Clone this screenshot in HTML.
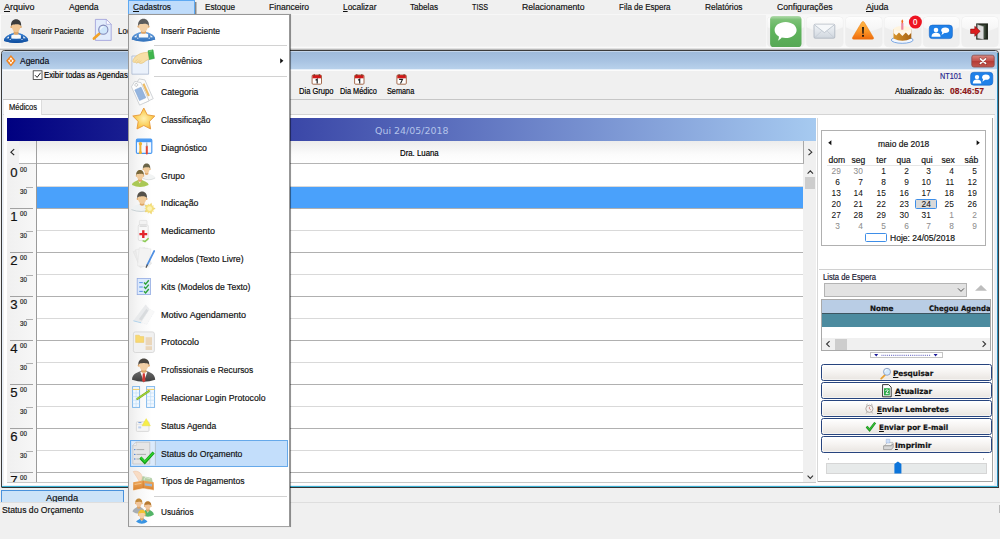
<!DOCTYPE html>
<html lang="pt-BR"><head><meta charset="utf-8"><title>Agenda</title>
<style>
*{box-sizing:border-box;margin:0;padding:0}
html,body{width:1000px;height:539px;overflow:hidden;background:#f0f0f0;font-family:"Liberation Sans",sans-serif}
#base,#top{position:absolute;left:0;top:0;width:1000px;height:539px;overflow:hidden}
#top{pointer-events:none}
.t{position:absolute;white-space:nowrap;display:inline-block;transform-origin:0 50%;-webkit-text-stroke:0.18px currentColor}
.a{position:absolute}
u{text-decoration:underline;text-decoration-thickness:0.7px;text-underline-offset:0.6px}
</style></head>
<body>
<div id="base">
<div class="a" style="left:0px;top:14px;width:1000.00px;height:1.00px;background:#f7f7f7"></div>
<div class="a" style="left:0px;top:15px;width:1.00px;height:34.00px;background:#fafafa"></div>
<div class="a" style="left:766px;top:14.6px;width:234.00px;height:34.80px;background:#f8f8f8"></div>
<div class="a" style="left:0px;top:46.4px;width:1000.00px;height:2.00px;background:linear-gradient(rgba(255,255,255,0),#fdfdfd)"></div>
<div class="a" style="left:0px;top:48.4px;width:1000.00px;height:1.60px;background:linear-gradient(#f4f4f4,#a8a8a8)"></div>
<div class="a" style="left:0.8px;top:49.8px;width:998.00px;height:438.10px;background:#e6eff9;border:1px solid #3b3b3b;border-radius:3.6px 3.6px 1px 1px"></div>
<div class="a" style="left:996.6px;top:53px;width:1.40px;height:434.00px;background:linear-gradient(90deg,#3aa0cc,#1f7fae)"></div>
<div class="a" style="left:2px;top:485.6px;width:996.00px;height:1.40px;background:linear-gradient(#48c4e2,#2a9cc0)"></div>
<div class="a" style="left:997.9px;top:53px;width:0.90px;height:434.90px;background:#3a3a3a"></div>
<div class="a" style="left:1.8px;top:486.9px;width:997.00px;height:1.00px;background:#333"></div>
<div class="a" style="left:1.8px;top:50.8px;width:994.90px;height:18.70px;background:linear-gradient(#dce7f4 0,#9fbbdb 7%,#a8c3e2 55%,#b8d1eb 100%);border-radius:2.6px 2.6px 0 0"></div>
<div class="a" style="left:2.8px;top:69.5px;width:992.60px;height:414.50px;background:#f0f0f0;border-top:1px solid #fbfbfb"></div>
<div class="a" style="left:2.8px;top:99px;width:992.60px;height:1.00px;background:#c6c6c6"></div>
<div class="a" style="left:2.8px;top:114.1px;width:992.60px;height:0.90px;background:#d4d4d4"></div>
<div class="a" style="left:3.8px;top:100px;width:38.40px;height:15.00px;background:#fff;border-right:1px solid #dcdcdc"></div>
<div class="a" style="left:3.5px;top:115px;width:990.90px;height:370.40px;background:#fff"></div>
<div class="a" style="left:7px;top:118px;width:809.30px;height:23.00px;background:linear-gradient(90deg,#000080,#a6caf0)"></div>
<div class="a" style="left:7px;top:141px;width:797.00px;height:23.00px;background:linear-gradient(#ececec,#fbfbfb 60%,#fff);border-bottom:1px solid #b4b4b4;border-right:1px solid #a8a8a8"></div>
<div class="a" style="left:7px;top:141px;width:12.00px;height:23.00px;background:#f2f2f2"></div>
<div class="a" style="left:36.3px;top:141px;width:1.00px;height:23.00px;background:#a0a0a0"></div>
<div class="a" style="left:7px;top:164.3px;width:29.30px;height:317.70px;background:linear-gradient(90deg,#f0f0f0,#f7f7f7)"></div>
<div class="a" style="left:36.3px;top:164px;width:1.00px;height:318.00px;background:#9a9a9a"></div>
<div class="a" style="left:37.3px;top:185.8px;width:765.30px;height:1.00px;background:#d9d9d9"></div>
<div class="a" style="left:26.2px;top:186.60000000000002px;width:7.00px;height:0.80px;background:#b0b0b0"></div>
<div class="a" style="left:37.3px;top:207.8px;width:765.30px;height:1.00px;background:#b0b0b0"></div>
<div class="a" style="left:9.6px;top:208.4px;width:23.60px;height:1.00px;background:#a2a2a2"></div>
<div class="a" style="left:37.3px;top:229.8px;width:765.30px;height:1.00px;background:#d9d9d9"></div>
<div class="a" style="left:26.2px;top:230.60000000000002px;width:7.00px;height:0.80px;background:#b0b0b0"></div>
<div class="a" style="left:37.3px;top:251.8px;width:765.30px;height:1.00px;background:#b0b0b0"></div>
<div class="a" style="left:9.6px;top:252.4px;width:23.60px;height:1.00px;background:#a2a2a2"></div>
<div class="a" style="left:37.3px;top:273.8px;width:765.30px;height:1.00px;background:#d9d9d9"></div>
<div class="a" style="left:26.2px;top:274.6px;width:7.00px;height:0.80px;background:#b0b0b0"></div>
<div class="a" style="left:37.3px;top:295.8px;width:765.30px;height:1.00px;background:#b0b0b0"></div>
<div class="a" style="left:9.6px;top:296.40000000000003px;width:23.60px;height:1.00px;background:#a2a2a2"></div>
<div class="a" style="left:37.3px;top:317.8px;width:765.30px;height:1.00px;background:#d9d9d9"></div>
<div class="a" style="left:26.2px;top:318.6px;width:7.00px;height:0.80px;background:#b0b0b0"></div>
<div class="a" style="left:37.3px;top:339.8px;width:765.30px;height:1.00px;background:#b0b0b0"></div>
<div class="a" style="left:9.6px;top:340.40000000000003px;width:23.60px;height:1.00px;background:#a2a2a2"></div>
<div class="a" style="left:37.3px;top:361.8px;width:765.30px;height:1.00px;background:#d9d9d9"></div>
<div class="a" style="left:26.2px;top:362.6px;width:7.00px;height:0.80px;background:#b0b0b0"></div>
<div class="a" style="left:37.3px;top:383.8px;width:765.30px;height:1.00px;background:#b0b0b0"></div>
<div class="a" style="left:9.6px;top:384.40000000000003px;width:23.60px;height:1.00px;background:#a2a2a2"></div>
<div class="a" style="left:37.3px;top:405.8px;width:765.30px;height:1.00px;background:#d9d9d9"></div>
<div class="a" style="left:26.2px;top:406.6px;width:7.00px;height:0.80px;background:#b0b0b0"></div>
<div class="a" style="left:37.3px;top:427.8px;width:765.30px;height:1.00px;background:#b0b0b0"></div>
<div class="a" style="left:9.6px;top:428.40000000000003px;width:23.60px;height:1.00px;background:#a2a2a2"></div>
<div class="a" style="left:37.3px;top:449.8px;width:765.30px;height:1.00px;background:#d9d9d9"></div>
<div class="a" style="left:26.2px;top:450.6px;width:7.00px;height:0.80px;background:#b0b0b0"></div>
<div class="a" style="left:37.3px;top:471.8px;width:765.30px;height:1.00px;background:#b0b0b0"></div>
<div class="a" style="left:9.6px;top:472.40000000000003px;width:23.60px;height:1.00px;background:#a2a2a2"></div>
<div class="a" style="left:37.3px;top:186.8px;width:765.30px;height:21.40px;background:#4aa1fb"></div>
<div class="a" style="left:802.5px;top:164px;width:0.80px;height:318.00px;background:#e4e4e4"></div>
<div class="a" style="left:804.4px;top:141px;width:11.80px;height:23.00px;background:#f0f0f0"></div>
<div class="a" style="left:803.4px;top:164px;width:12.80px;height:318.00px;background:#f0f0f0"></div>
<div class="a" style="left:7px;top:481.7px;width:809.20px;height:0.90px;background:#c8c8c8"></div>
<div class="a" style="left:805px;top:177.3px;width:10.30px;height:12.00px;background:#cdcdcd"></div>
<svg class="a" style="left:804px;top:141px" width="12" height="341" viewBox="0 0 12 341"><g fill="none" stroke="#333" stroke-width="1.1"><path d="M4.5 8.2L7.8 11.2L4.5 14.2"/><path d="M3.6 32.6L6.3 29.8L9 32.6"/><path d="M3.6 334.6L6.3 337.4L9 334.6"/></g></svg>
<svg class="a" style="left:7px;top:141px" width="12" height="23" viewBox="0 0 12 23"><path d="M7.2 8.2L3.9 11.2L7.2 14.2" fill="none" stroke="#222" stroke-width="1.1"/></svg>
<div class="a" style="left:817.3px;top:118px;width:1.00px;height:364.00px;background:#d8d8d8"></div>
<div class="a" style="left:818.3px;top:118px;width:174.70px;height:364.00px;background:#fff;border-right:1px solid #a6a6a6;border-bottom:1px solid #a6a6a6"></div>
<div class="a" style="left:821px;top:130px;width:165.20px;height:116.30px;background:#fff;border:1px solid #b0b0b0"></div>
<div class="a" style="left:827px;top:164.5px;width:153.00px;height:0.80px;background:#e6e6e6"></div>
<div class="a" style="left:915.2px;top:198.7px;width:22.20px;height:10.80px;background:#d9d9d9;border:1px solid #3e8ee8;border-radius:1.5px"></div>
<div class="a" style="left:865.3px;top:233.2px;width:21.30px;height:9.10px;background:#fff;border:1px solid #3e8ee8;border-radius:1.5px"></div>
<svg class="a" style="left:827px;top:139px" width="6" height="8" viewBox="0 0 6 8"><path d="M4.4 1.2V6.2L1.2 3.7Z" fill="#111"/></svg>
<svg class="a" style="left:975px;top:139px" width="6" height="8" viewBox="0 0 6 8"><path d="M1.6 1.2V6.2L4.8 3.7Z" fill="#111"/></svg>
<div class="a" style="left:819px;top:269.3px;width:173.00px;height:0.80px;background:#d0d0d0"></div>
<div class="a" style="left:823.9px;top:282.6px;width:143.60px;height:14.10px;background:#e2e2e2;border:1px solid #b3b3b3"></div>
<svg class="a" style="left:956px;top:286px" width="10" height="8" viewBox="0 0 10 8"><path d="M2 2.4L5 5.4L8 2.4" fill="none" stroke="#444" stroke-width="0.9"/></svg>
<svg class="a" style="left:974px;top:284px" width="14" height="8" viewBox="0 0 14 8"><path d="M1 6.8L7 1L13 6.8Z" fill="#bdbdbd"/></svg>
<div class="a" style="left:821.3px;top:299.4px;width:170.00px;height:51.60px;background:#fff;border:1px solid #a9a9a9"></div>
<div class="a" style="left:822.3px;top:300.4px;width:168.00px;height:12.60px;background:#b9cde5"></div>
<div class="a" style="left:822.3px;top:313px;width:168.00px;height:1.00px;background:#3d5560"></div>
<div class="a" style="left:822.3px;top:314px;width:168.00px;height:13.20px;background:#4c8b9f"></div>
<div class="a" style="left:822.3px;top:337.8px;width:168.00px;height:12.20px;background:#f0f0f0"></div>
<div class="a" style="left:835px;top:339px;width:12.00px;height:10.60px;background:#cdcdcd"></div>
<svg class="a" style="left:822px;top:338px" width="168" height="12" viewBox="0 0 168 12"><g fill="none" stroke="#333" stroke-width="1.1"><path d="M7.6 3.2L4.6 6L7.6 8.8"/><path d="M160.6 3.2L163.6 6L160.6 8.8"/></g></svg>
<div class="a" style="left:869.8px;top:352.3px;width:73.20px;height:5.50px;background:#fff;border:1px solid #c4c4c4"></div>
<svg class="a" style="left:870px;top:352px" width="73" height="6" viewBox="0 0 73 6"><path d="M4.2 2L8.2 2L6.2 4.6ZM63.6 2L67.6 2L65.6 4.6Z" fill="#1b1b9a"/><path d="M11.5 3.3H61" stroke="#3a3ab0" stroke-width="0.9" stroke-dasharray="0.9 1"/></svg>
<div class="a" style="left:820.9px;top:364.1px;width:170.80px;height:17.30px;background:linear-gradient(#fff,#f6f4f2 45%,#e9e5e1 100%);border:1px solid #27447e;border-radius:2.5px;box-shadow:inset 0 0 0 0.6px #fff"></div>
<div class="a" style="left:820.9px;top:381.8px;width:170.80px;height:17.30px;background:linear-gradient(#fff,#f6f4f2 45%,#e9e5e1 100%);border:1px solid #27447e;border-radius:2.5px;box-shadow:inset 0 0 0 0.6px #fff"></div>
<div class="a" style="left:820.9px;top:399.7px;width:170.80px;height:17.30px;background:linear-gradient(#fff,#f6f4f2 45%,#e9e5e1 100%);border:1px solid #27447e;border-radius:2.5px;box-shadow:inset 0 0 0 0.6px #fff"></div>
<div class="a" style="left:820.9px;top:418.0px;width:170.80px;height:17.30px;background:linear-gradient(#fff,#f6f4f2 45%,#e9e5e1 100%);border:1px solid #27447e;border-radius:2.5px;box-shadow:inset 0 0 0 0.6px #fff"></div>
<div class="a" style="left:820.9px;top:436.0px;width:170.80px;height:17.30px;background:linear-gradient(#fff,#f6f4f2 45%,#e9e5e1 100%);border:1px solid #27447e;border-radius:2.5px;box-shadow:inset 0 0 0 0.6px #fff"></div>
<div class="a" style="left:826px;top:463px;width:160.80px;height:10.50px;background:#e7eaea;border:1px solid #d6d6d6"></div>
<svg class="a" style="left:894px;top:461px" width="8" height="13" viewBox="0 0 8 13"><path d="M0.4 12.6V3L3.9 0.4L7.4 3V12.6Z" fill="#0c74da"/></svg>
<div class="a" style="left:828px;top:457.5px;width:0.70px;height:2.00px;background:#c4c4c4"></div>
<div class="a" style="left:983px;top:457.5px;width:0.70px;height:2.00px;background:#c4c4c4"></div>
<div class="a" style="left:1.0px;top:490.3px;width:122.80px;height:12.70px;background:#cce3f8;border:1px solid #4a92dc;border-bottom:none"></div>
<div class="a" style="left:0px;top:502.4px;width:1000.00px;height:0.80px;background:#dedede"></div>
<div class="a" style="left:998.6px;top:505px;width:0.80px;height:7.50px;background:#b8b8b8"></div>
<svg class="a" style="left:0;top:0" width="1000" height="539" viewBox="0 0 1000 539"><defs>
<linearGradient id="gGreen" x1="0" y1="0" x2="0" y2="1"><stop offset="0" stop-color="#b4dcae"/><stop offset="0.12" stop-color="#7cc176"/><stop offset="0.45" stop-color="#5fb45c"/><stop offset="1" stop-color="#57a856"/></linearGradient>
<linearGradient id="gWarn" x1="0" y1="0" x2="0" y2="1"><stop offset="0" stop-color="#ffb84a"/><stop offset="0.55" stop-color="#fb9526"/><stop offset="1" stop-color="#ee6a0c"/></linearGradient>
<linearGradient id="gMail" x1="0" y1="0" x2="0" y2="1"><stop offset="0" stop-color="#f2f5f8"/><stop offset="1" stop-color="#cfd6de"/></linearGradient>
<linearGradient id="gRed" x1="0" y1="0" x2="0" y2="1"><stop offset="0" stop-color="#d98a84"/><stop offset="0.45" stop-color="#c4534d"/><stop offset="0.5" stop-color="#b43a35"/><stop offset="1" stop-color="#c2574e"/></linearGradient>
<linearGradient id="gGloss" x1="0" y1="0" x2="0" y2="1"><stop offset="0" stop-color="#fdfdfd"/><stop offset="1" stop-color="#f4f4f4"/></linearGradient>
<radialGradient id="gStar" cx="0.5" cy="0.5" r="0.6"><stop offset="0" stop-color="#fff0b0"/><stop offset="0.6" stop-color="#fbcf5a"/><stop offset="1" stop-color="#f3a83a"/></radialGradient>
<linearGradient id="gBlueBody" x1="0" y1="0" x2="0" y2="1"><stop offset="0" stop-color="#3f86d6"/><stop offset="1" stop-color="#0d4c9e"/></linearGradient>
<linearGradient id="gBlueBody2" x1="0" y1="0" x2="0" y2="1"><stop offset="0" stop-color="#6aa2e0"/><stop offset="1" stop-color="#3272bc"/></linearGradient>
<linearGradient id="gSuit" x1="0" y1="0" x2="0" y2="1"><stop offset="0" stop-color="#6c6c6c"/><stop offset="1" stop-color="#3e3e3e"/></linearGradient>
<linearGradient id="gWallet" x1="0" y1="0" x2="0" y2="1"><stop offset="0" stop-color="#eda65a"/><stop offset="1" stop-color="#d9822e"/></linearGradient>
<linearGradient id="gCake" x1="0" y1="0" x2="1" y2="0"><stop offset="0" stop-color="#d8942c"/><stop offset="1" stop-color="#a86414"/></linearGradient>
</defs>
<g opacity="1"><path d="M4.0,41.1 C4.0,35.1 11.6,34.2 13.9,32.8 L18.4,32.8 C20.6,34.2 28.2,35.1 28.2,41.1 Q16.1,44.9 4.0,41.1Z" fill="url(#gBlueBody)"/><clipPath id="cp1"><path d="M4.0,41.1 C4.0,35.1 11.6,34.2 13.9,32.8 L18.4,32.8 C20.6,34.2 28.2,35.1 28.2,41.1 Q16.1,44.9 4.0,41.1Z"/></clipPath><g clip-path="url(#cp1)"><path d="M3.0,31.6 H29.2 V37.8 Q16.1,39.6 3.0,37.8Z" fill="#fafafa"/><path d="M9.2,32.6 H11.3 V39.8 H8.8Z" fill="url(#gBlueBody)"/><path d="M23.0,32.6 H20.9 V39.8 H23.4Z" fill="url(#gBlueBody)"/><path d="M4.0,41.1 C4.0,35.1 11.6,34.2 13.9,32.8 L18.4,32.8 C20.6,34.2 28.2,35.1 28.2,41.1 Q16.1,44.9 4.0,41.1Z" fill="none" stroke="url(#gBlueBody)" stroke-width="2.8"/><circle cx="10.2" cy="39.4" r="0.7" fill="#cfe0f6"/><circle cx="22.0" cy="39.4" r="0.7" fill="#cfe0f6"/></g><path d="M14.0,29.6 L13.6,33.9 Q16.1,35.8 18.6,33.9 L18.2,29.6Z" fill="#dfa566"/><circle cx="11.6" cy="26.9" r="1.20" fill="#e3ad72"/><circle cx="20.6" cy="26.9" r="1.20" fill="#e3ad72"/><path d="M11.6,23.6 C11.4,29.3 13.6,32.3 16.1,32.3 C18.6,32.3 20.9,29.3 20.6,23.6 Q16.1,18.9 11.6,23.6Z" fill="#f1c694"/><path d="M11.1,26.6 C9.6,16.8 22.6,16.8 21.1,26.6 C20.2,23.6 17.6,24.8 16.1,24.3 C14.1,24.8 12.0,23.6 11.1,26.6Z" fill="#3c3c3c"/></g>
<path d="M95.4,19.4H106.3L111.2,24.3V40.4H95.4Z" fill="#e2ecfc" stroke="#9c9cd8" stroke-width="0.8"/><path d="M106.3,19.4V24.3H111.2Z" fill="#fff" stroke="#9c9cd8" stroke-width="0.6"/><path d="M99.6,33.6L93.9,38.6" stroke="#f2a227" stroke-width="2.6" stroke-linecap="round"/><circle cx="103.3" cy="29.7" r="4.6" fill="#cfe6fb" stroke="#8288b8" stroke-width="1.1"/><path d="M100.6,29.6A2.9,2.9 0 0 1 103.6,26.7" stroke="#fff" stroke-width="1" fill="none"/>
<rect x="767.2" y="16.8" width="37.2" height="30.0" rx="4" fill="#eeeeee" stroke="#ececec" stroke-width="0.5"/><path d="M767.5,20.8 Q767.5,17.1 771.2,17.1 L800.4,17.1 Q804.1,17.1 804.1,20.8 L804.1,27.3 Q785.8,36.3 767.5,27.3Z" fill="url(#gGloss)"/>
<rect x="806.3" y="16.8" width="36.9" height="30.0" rx="4" fill="#eeeeee" stroke="#ececec" stroke-width="0.5"/><path d="M806.5999999999999,20.8 Q806.5999999999999,17.1 810.3,17.1 L839.2,17.1 Q842.9000000000001,17.1 842.9000000000001,20.8 L842.9000000000001,27.3 Q824.8,36.3 806.5999999999999,27.3Z" fill="url(#gGloss)"/>
<rect x="845.5" y="16.8" width="36.7" height="30.0" rx="4" fill="#eeeeee" stroke="#ececec" stroke-width="0.5"/><path d="M845.8,20.8 Q845.8,17.1 849.5,17.1 L878.2,17.1 Q881.9000000000001,17.1 881.9000000000001,20.8 L881.9000000000001,27.3 Q863.9,36.3 845.8,27.3Z" fill="url(#gGloss)"/>
<rect x="884.3" y="16.8" width="37.0" height="30.0" rx="4" fill="#eeeeee" stroke="#ececec" stroke-width="0.5"/><path d="M884.5999999999999,20.8 Q884.5999999999999,17.1 888.3,17.1 L917.3,17.1 Q921.0,17.1 921.0,20.8 L921.0,27.3 Q902.8,36.3 884.5999999999999,27.3Z" fill="url(#gGloss)"/>
<rect x="923.2" y="16.8" width="36.2" height="30.0" rx="4" fill="#eeeeee" stroke="#ececec" stroke-width="0.5"/><path d="M923.5,20.8 Q923.5,17.1 927.2,17.1 L955.4,17.1 Q959.1,17.1 959.1,20.8 L959.1,27.3 Q941.3,36.3 923.5,27.3Z" fill="url(#gGloss)"/>
<rect x="961.7" y="16.8" width="36.6" height="30.0" rx="4" fill="#eeeeee" stroke="#ececec" stroke-width="0.5"/><path d="M962.0,20.8 Q962.0,17.1 965.7,17.1 L994.3,17.1 Q998.0,17.1 998.0,20.8 L998.0,27.3 Q980.0,36.3 962.0,27.3Z" fill="url(#gGloss)"/>
<rect x="770.1" y="16" width="31.4" height="31" rx="3.6" fill="url(#gGreen)"/><path d="M785.6,21.9C791.8,21.9 796.6,25.5 796.6,30C796.6,34.5 791.8,38.1 785.6,38.1C784.2,38.1 782.9,37.9 781.7,37.6C780.8,38.9 779.4,40.2 777.8,40.7C778.6,39.6 779.0,38.1 778.9,36.6C776.3,35.1 774.6,32.7 774.6,30C774.6,25.5 779.4,21.9 785.6,21.9Z" fill="#fff"/>
<rect x="814" y="24.2" width="20.8" height="14" rx="1.2" fill="url(#gMail)" stroke="#a9b1bc" stroke-width="0.8"/><path d="M814.4,24.8L824.4,32.6L834.4,24.8" fill="#f6f8fa" stroke="#b4bcc6" stroke-width="0.8"/><path d="M814.6,37.8L821.6,31.2M834.2,37.8L827.2,31.2" stroke="#bcc3cc" stroke-width="0.6" fill="none"/>
<path d="M863,21.6Q863.9,21.6 864.4,22.5L873.5,37.6Q874.2,39.2 872.4,39.2H853.6Q851.8,39.2 852.5,37.6L861.6,22.5Q862.1,21.6 863,21.6Z" fill="url(#gWarn)" stroke="#e8780f" stroke-width="0.5"/><path d="M862.1,27H863.9L863.6,33.8H862.4Z" fill="#111"/><rect x="862.1" y="34.9" width="1.8" height="1.8" fill="#111"/>
<ellipse cx="902.2" cy="40" rx="10.9" ry="3.3" fill="#f2f7ff" stroke="#6f9fe0" stroke-width="0.9"/><path d="M893.5,29.2V38.6Q902.4,43 911.3,38.6V29.2Z" fill="url(#gCake)"/><ellipse cx="902.4" cy="29.2" rx="8.9" ry="3.2" fill="#fff4de"/><path d="M893.5,29.4V33L896.2,35.6L899,32.6L902.4,36L905.8,32.6L908.6,35.4L911.3,32.8V29.4Q902.4,33.6 893.5,29.4Z" fill="#fff8ec"/><rect x="901.2" y="22.8" width="2.2" height="7" rx="0.6" fill="#ee86a0"/><path d="M902.3,19.2Q904.2,21.6 902.3,23.6Q900.4,21.6 902.3,19.2Z" fill="#f2661a"/><circle cx="915.4" cy="22.1" r="6.5" fill="#ee1422"/>
<rect x="929.3" y="25.1" width="23.1" height="13.5" rx="3.2" fill="#1f80e8" stroke="#1463c4" stroke-width="0.6"/><circle cx="936.0" cy="30.1" r="2.30" fill="#fff"/><path d="M931.5,36.7Q931.5,32.7 936.0,32.7Q940.5,32.7 940.5,36.7Z" fill="#fff"/><ellipse cx="945.2" cy="30.2" rx="3.93" ry="2.70" fill="#fff"/><path d="M942.5,31.6L941.5,35.1L944.8,32.7Z" fill="#fff"/>
<rect x="970.6" y="72.3" width="22.2" height="12.9" rx="3.2" fill="#1f80e8" stroke="#1463c4" stroke-width="0.6"/><circle cx="977.0" cy="77.1" r="2.19" fill="#fff"/><path d="M972.8,83.4Q972.8,79.5 977.0,79.5Q981.3,79.5 981.3,83.4Z" fill="#fff"/><ellipse cx="985.9" cy="77.2" rx="3.77" ry="2.58" fill="#fff"/><path d="M983.3,78.5L982.4,81.8L985.5,79.5Z" fill="#fff"/>
<rect x="976.2" y="23.4" width="11.8" height="16.2" fill="#23291f"/><path d="M977.6,24.8H985.6V38.2H977.6Z" fill="#3c4a3a"/><path d="M977.4,24.6L983.6,26.6V39.4L977.4,38.2Z" fill="#dcdcdc" stroke="#8a8a8a" stroke-width="0.4"/><path d="M970.6,29.1H974.8V26.3L980.2,31.3L974.8,36.3V33.5H970.6Z" fill="#dc1c1c" stroke="#7e0e0e" stroke-width="0.6"/>
<rect x="971.8" y="55.2" width="22.4" height="11.8" rx="2" fill="url(#gRed)" stroke="#8a4a48" stroke-width="0.8"/><path d="M980.2,58.6L985.8,63.6M985.8,58.6L980.2,63.6" stroke="#5a2a2a" stroke-width="2.6" stroke-linecap="round" opacity="0.5"/><path d="M980.4,58.8L985.6,63.4M985.6,58.8L980.4,63.4" stroke="#fff" stroke-width="1.6" stroke-linecap="round"/>
<path d="M10.9,55L15.7,60.7L10.9,66.4L6.1,60.7Z" fill="#f0831f"/><path d="M10.9,57.2L13.7,60.7L10.9,64.2L8.1,60.7Z" fill="#fff"/><path d="M10.9,59.2L12.2,60.7L10.9,62.2L9.6,60.7Z" fill="#f39a45"/><path d="M8.6,58.2L13.2,63.4M13.2,58.2L8.6,63.4" stroke="#f0831f" stroke-width="0.7"/>
<rect x="33.2" y="70.8" width="8.8" height="8.6" fill="#fff" stroke="#333" stroke-width="0.8"/><path d="M35,75.2L37.1,77.4L40.6,72.8" fill="none" stroke="#222" stroke-width="1"/>
<rect x="312.1" y="75.0" width="9.4" height="9.2" rx="1" fill="#fff" stroke="#9a5a3a" stroke-width="0.9"/><rect x="312.5" y="75.10000000000001" width="8.6" height="3.2" fill="#d21a1a"/><rect x="313.70000000000005" y="74.2" width="1.2" height="2" fill="#7a3a2a"/><rect x="318.70000000000005" y="74.2" width="1.2" height="2" fill="#7a3a2a"/><path d="M315.6,80.2L317.2,79.2V83.6" stroke="#222" stroke-width="1.2" fill="none"/>
<rect x="354.6" y="75.0" width="9.4" height="9.2" rx="1" fill="#fff" stroke="#9a5a3a" stroke-width="0.9"/><rect x="355.0" y="75.10000000000001" width="8.6" height="3.2" fill="#d21a1a"/><rect x="356.20000000000005" y="74.2" width="1.2" height="2" fill="#7a3a2a"/><rect x="361.20000000000005" y="74.2" width="1.2" height="2" fill="#7a3a2a"/><path d="M358.1,80.2L359.7,79.2V83.6" stroke="#222" stroke-width="1.2" fill="none"/>
<rect x="396.9" y="75.0" width="9.4" height="9.2" rx="1" fill="#fff" stroke="#9a5a3a" stroke-width="0.9"/><rect x="397.29999999999995" y="75.10000000000001" width="8.6" height="3.2" fill="#d21a1a"/><rect x="398.5" y="74.2" width="1.2" height="2" fill="#7a3a2a"/><rect x="403.5" y="74.2" width="1.2" height="2" fill="#7a3a2a"/><path d="M399.1,79.4H402.5L400.5,83.6" stroke="#222" stroke-width="1.1" fill="none"/>
<path d="M884.8,375.2L881.2,378.6" stroke="#e8a030" stroke-width="1.8" stroke-linecap="round"/><circle cx="887" cy="371.8" r="3.5" fill="#d4eafc" stroke="#8a9cc0" stroke-width="0.9"/><path d="M885,371.6A2,2 0 0 1 887.2,369.6" stroke="#fff" stroke-width="0.8" fill="none"/>
<path d="M882.6,384.6H888.6L891.2,387.2V396.8H882.6Z" fill="#fff" stroke="#222" stroke-width="0.9"/><rect x="884" y="388.2" width="5.8" height="7.2" fill="#2fa84a"/><path d="M885.4,390.6Q886.9,389 888.3,390.4L886,393.6H888.6" stroke="#fff" stroke-width="0.9" fill="none"/>
<circle cx="869.4" cy="408.8" r="3.6" fill="#f4f0ee" stroke="#a8a09c" stroke-width="0.9"/><path d="M869.4,406.8V408.9L870.8,409.8" stroke="#c0504a" stroke-width="0.6" fill="none"/><path d="M866.2,405.2L867.6,404M872.6,405.2L871.2,404M867,412.2L866.2,413.4M871.8,412.2L872.6,413.4" stroke="#a8a09c" stroke-width="0.9"/>
<path d="M866.6,426.6L869.6,430L875.2,422.6" fill="none" stroke="#1e8a1e" stroke-width="2.4"/><path d="M866.8,426.6L869.6,429.6L875,422.8" fill="none" stroke="#35c035" stroke-width="1.3"/>
<path d="M884.6,445.6L887.4,442.4H892.8L890.8,445.6Z" fill="#f4f4f4" stroke="#9a9a9a" stroke-width="0.5"/><path d="M883.6,445.8H891.4L893.2,443.6V447.2L891.4,449.6H883.6Z" fill="#d8d8d8" stroke="#7a7a7a" stroke-width="0.6"/><path d="M886.2,439.2H889.8V443H886.2Z" fill="#cfe0f8" stroke="#8aa6d8" stroke-width="0.4"/>
</svg>
<span class="t" style="left:4.10px;top:1.54px;font-size:8.9px;line-height:10.68px;color:#111;transform:scaleX(1.0136);"><u>A</u>rquivo</span>
<span class="t" style="left:69.00px;top:1.54px;font-size:8.9px;line-height:10.68px;color:#111;transform:scaleX(0.9641);">Agenda</span>
<span class="t" style="left:204.50px;top:1.54px;font-size:8.9px;line-height:10.68px;color:#111;transform:scaleX(0.9212);">Estoque</span>
<span class="t" style="left:268.50px;top:1.54px;font-size:8.9px;line-height:10.68px;color:#111;transform:scaleX(0.9653);">Financeiro</span>
<span class="t" style="left:342.50px;top:1.54px;font-size:8.9px;line-height:10.68px;color:#111;transform:scaleX(0.9432);"><u>L</u>ocalizar</span>
<span class="t" style="left:410.00px;top:1.54px;font-size:8.9px;line-height:10.68px;color:#111;transform:scaleX(0.9154);">Tabelas</span>
<span class="t" style="left:472.00px;top:1.54px;font-size:8.9px;line-height:10.68px;color:#111;transform:scaleX(0.8111);">TISS</span>
<span class="t" style="left:522.00px;top:1.54px;font-size:8.9px;line-height:10.68px;color:#111;transform:scaleX(0.9745);">Relacionamento</span>
<span class="t" style="left:618.50px;top:1.54px;font-size:8.9px;line-height:10.68px;color:#111;transform:scaleX(0.9000);">Fila de Espera</span>
<span class="t" style="left:704.50px;top:1.54px;font-size:8.9px;line-height:10.68px;color:#111;transform:scaleX(0.9386);">Relatórios</span>
<span class="t" style="left:776.50px;top:1.54px;font-size:8.9px;line-height:10.68px;color:#111;transform:scaleX(0.9698);">Configurações</span>
<span class="t" style="left:866.00px;top:1.54px;font-size:8.9px;line-height:10.68px;color:#111;transform:scaleX(0.9912);"><u>A</u>juda</span>
<span class="t" style="left:31.00px;top:27.01px;font-size:8.2px;line-height:9.84px;color:#111;transform:scaleX(0.9317);">Inserir Paciente</span>
<span class="t" style="left:118.00px;top:27.01px;font-size:8.2px;line-height:9.84px;color:#111;transform:scaleX(0.9766);">Localizar</span>
<span class="t" style="left:913.20px;top:17.61px;font-size:8.2px;line-height:9.84px;color:#fff;transform:scaleX(0.9663);">0</span>
<span class="t" style="left:20.20px;top:55.55px;font-size:8.9px;line-height:10.68px;color:#0a0a14;transform:scaleX(0.9543);">Agenda</span>
<span class="t" style="left:44.00px;top:70.51px;font-size:8.2px;line-height:9.84px;color:#000;transform:scaleX(0.9547);">Exibir todas as Agendas</span>
<span class="t" style="left:298.70px;top:87.01px;font-size:8.2px;line-height:9.84px;color:#000;transform:scaleX(0.9219);">Dia Grupo</span>
<span class="t" style="left:340.10px;top:87.01px;font-size:8.2px;line-height:9.84px;color:#000;transform:scaleX(0.8986);">Dia Médico</span>
<span class="t" style="left:387.20px;top:87.01px;font-size:8.2px;line-height:9.84px;color:#000;transform:scaleX(0.8919);">Semana</span>
<span class="t" style="left:940.00px;top:71.81px;font-size:8.3px;line-height:9.96px;color:#26268e;transform:scaleX(0.8754);">NT101</span>
<span class="t" style="left:895.10px;top:87.11px;font-size:8.2px;line-height:9.84px;color:#000;transform:scaleX(0.9547);">Atualizado às:</span>
<span class="t" style="left:950.00px;top:87.02px;font-size:8.3px;line-height:9.96px;color:#8c1616;font-weight:bold;transform:scaleX(1.0207);">08:46:57</span>
<span class="t" style="left:9.00px;top:102.91px;font-size:8.2px;line-height:9.84px;color:#111;transform:scaleX(0.9184);">Médicos</span>
<span class="t" style="left:374.60px;top:125.53px;font-size:8.6px;line-height:10.32px;color:#b4c3ea;font-family:'DejaVu Sans', 'Liberation Sans', sans-serif;transform:scaleX(1.0978);-webkit-text-stroke:0;">Qui 24/05/2018</span>
<span class="t" style="left:400.00px;top:149.11px;font-size:8.2px;line-height:9.84px;color:#000;transform:scaleX(0.9553);">Dra. Luana</span>
<span class="t" style="left:10.20px;top:165.46px;font-size:13.2px;line-height:15.84px;color:#111;">0</span>
<span class="t" style="left:20.10px;top:165.73px;font-size:6.6px;line-height:7.92px;color:#222;transform:scaleX(0.9408);">00</span>
<span class="t" style="left:20.10px;top:188.03px;font-size:6.6px;line-height:7.92px;color:#222;transform:scaleX(0.9408);">30</span>
<span class="t" style="left:10.20px;top:209.46px;font-size:13.2px;line-height:15.84px;color:#111;">1</span>
<span class="t" style="left:20.10px;top:209.73px;font-size:6.6px;line-height:7.92px;color:#222;transform:scaleX(0.9408);">00</span>
<span class="t" style="left:20.10px;top:232.03px;font-size:6.6px;line-height:7.92px;color:#222;transform:scaleX(0.9408);">30</span>
<span class="t" style="left:10.20px;top:253.46px;font-size:13.2px;line-height:15.84px;color:#111;">2</span>
<span class="t" style="left:20.10px;top:253.73px;font-size:6.6px;line-height:7.92px;color:#222;transform:scaleX(0.9408);">00</span>
<span class="t" style="left:20.10px;top:276.03px;font-size:6.6px;line-height:7.92px;color:#222;transform:scaleX(0.9408);">30</span>
<span class="t" style="left:10.20px;top:297.46px;font-size:13.2px;line-height:15.84px;color:#111;">3</span>
<span class="t" style="left:20.10px;top:297.73px;font-size:6.6px;line-height:7.92px;color:#222;transform:scaleX(0.9408);">00</span>
<span class="t" style="left:20.10px;top:320.03px;font-size:6.6px;line-height:7.92px;color:#222;transform:scaleX(0.9408);">30</span>
<span class="t" style="left:10.20px;top:341.46px;font-size:13.2px;line-height:15.84px;color:#111;">4</span>
<span class="t" style="left:20.10px;top:341.73px;font-size:6.6px;line-height:7.92px;color:#222;transform:scaleX(0.9408);">00</span>
<span class="t" style="left:20.10px;top:364.03px;font-size:6.6px;line-height:7.92px;color:#222;transform:scaleX(0.9408);">30</span>
<span class="t" style="left:10.20px;top:385.46px;font-size:13.2px;line-height:15.84px;color:#111;">5</span>
<span class="t" style="left:20.10px;top:385.73px;font-size:6.6px;line-height:7.92px;color:#222;transform:scaleX(0.9408);">00</span>
<span class="t" style="left:20.10px;top:408.03px;font-size:6.6px;line-height:7.92px;color:#222;transform:scaleX(0.9408);">30</span>
<span class="t" style="left:10.20px;top:429.46px;font-size:13.2px;line-height:15.84px;color:#111;">6</span>
<span class="t" style="left:20.10px;top:429.73px;font-size:6.6px;line-height:7.92px;color:#222;transform:scaleX(0.9408);">00</span>
<span class="t" style="left:20.10px;top:452.03px;font-size:6.6px;line-height:7.92px;color:#222;transform:scaleX(0.9408);">30</span>
<div class="a" style="left:0;top:0;width:1000px;height:481.7px;overflow:hidden"><span class="t" style="left:10.20px;top:473.46px;font-size:13.2px;line-height:15.84px;color:#111;">7</span></div>
<span class="t" style="left:20.10px;top:473.73px;font-size:6.6px;line-height:7.92px;color:#222;transform:scaleX(0.9408);">00</span>
<span class="t" style="left:878.00px;top:139.24px;font-size:8.8px;line-height:10.56px;color:#111;transform:scaleX(0.9623);">maio de 2018</span>
<span class="t" style="top:154.74px;font-size:8.8px;line-height:10.56px;color:#111;left:auto;right:155.3px;transform-origin:100% 50%;transform:scaleX(0.97);">dom</span>
<span class="t" style="top:154.74px;font-size:8.8px;line-height:10.56px;color:#111;left:auto;right:135.0px;transform-origin:100% 50%;transform:scaleX(0.97);">seg</span>
<span class="t" style="top:154.74px;font-size:8.8px;line-height:10.56px;color:#111;left:auto;right:114.0px;transform-origin:100% 50%;transform:scaleX(0.97);">ter</span>
<span class="t" style="top:154.74px;font-size:8.8px;line-height:10.56px;color:#111;left:auto;right:89.7px;transform-origin:100% 50%;transform:scaleX(0.97);">qua</span>
<span class="t" style="top:154.74px;font-size:8.8px;line-height:10.56px;color:#111;left:auto;right:67.4px;transform-origin:100% 50%;transform:scaleX(0.97);">qui</span>
<span class="t" style="top:154.74px;font-size:8.8px;line-height:10.56px;color:#111;left:auto;right:45.4px;transform-origin:100% 50%;transform:scaleX(0.97);">sex</span>
<span class="t" style="top:154.74px;font-size:8.8px;line-height:10.56px;color:#111;left:auto;right:21.8px;transform-origin:100% 50%;transform:scaleX(0.97);">sáb</span>
<span class="t" style="top:166.04px;font-size:8.8px;line-height:10.56px;color:#8e8e8e;left:auto;right:159.7px;transform-origin:100% 50%;transform:scaleX(0.95);-webkit-text-stroke:0.05px currentColor;">29</span>
<span class="t" style="top:166.04px;font-size:8.8px;line-height:10.56px;color:#8e8e8e;left:auto;right:137.0px;transform-origin:100% 50%;transform:scaleX(0.95);-webkit-text-stroke:0.05px currentColor;">30</span>
<span class="t" style="top:166.04px;font-size:8.8px;line-height:10.56px;color:#111;left:auto;right:114.4px;transform-origin:100% 50%;transform:scaleX(0.95);-webkit-text-stroke:0.05px currentColor;">1</span>
<span class="t" style="top:166.04px;font-size:8.8px;line-height:10.56px;color:#111;left:auto;right:91.6px;transform-origin:100% 50%;transform:scaleX(0.95);-webkit-text-stroke:0.05px currentColor;">2</span>
<span class="t" style="top:166.04px;font-size:8.8px;line-height:10.56px;color:#111;left:auto;right:68.8px;transform-origin:100% 50%;transform:scaleX(0.95);-webkit-text-stroke:0.05px currentColor;">3</span>
<span class="t" style="top:166.04px;font-size:8.8px;line-height:10.56px;color:#111;left:auto;right:46.2px;transform-origin:100% 50%;transform:scaleX(0.95);-webkit-text-stroke:0.05px currentColor;">4</span>
<span class="t" style="top:166.04px;font-size:8.8px;line-height:10.56px;color:#111;left:auto;right:23.4px;transform-origin:100% 50%;transform:scaleX(0.95);-webkit-text-stroke:0.05px currentColor;">5</span>
<span class="t" style="top:177.06px;font-size:8.8px;line-height:10.56px;color:#111;left:auto;right:159.7px;transform-origin:100% 50%;transform:scaleX(0.95);-webkit-text-stroke:0.05px currentColor;">6</span>
<span class="t" style="top:177.06px;font-size:8.8px;line-height:10.56px;color:#111;left:auto;right:137.0px;transform-origin:100% 50%;transform:scaleX(0.95);-webkit-text-stroke:0.05px currentColor;">7</span>
<span class="t" style="top:177.06px;font-size:8.8px;line-height:10.56px;color:#111;left:auto;right:114.4px;transform-origin:100% 50%;transform:scaleX(0.95);-webkit-text-stroke:0.05px currentColor;">8</span>
<span class="t" style="top:177.06px;font-size:8.8px;line-height:10.56px;color:#111;left:auto;right:91.6px;transform-origin:100% 50%;transform:scaleX(0.95);-webkit-text-stroke:0.05px currentColor;">9</span>
<span class="t" style="top:177.06px;font-size:8.8px;line-height:10.56px;color:#111;left:auto;right:68.8px;transform-origin:100% 50%;transform:scaleX(0.95);-webkit-text-stroke:0.05px currentColor;">10</span>
<span class="t" style="top:177.06px;font-size:8.8px;line-height:10.56px;color:#111;left:auto;right:46.2px;transform-origin:100% 50%;transform:scaleX(0.95);-webkit-text-stroke:0.05px currentColor;">11</span>
<span class="t" style="top:177.06px;font-size:8.8px;line-height:10.56px;color:#111;left:auto;right:23.4px;transform-origin:100% 50%;transform:scaleX(0.95);-webkit-text-stroke:0.05px currentColor;">12</span>
<span class="t" style="top:188.08px;font-size:8.8px;line-height:10.56px;color:#111;left:auto;right:159.7px;transform-origin:100% 50%;transform:scaleX(0.95);-webkit-text-stroke:0.05px currentColor;">13</span>
<span class="t" style="top:188.08px;font-size:8.8px;line-height:10.56px;color:#111;left:auto;right:137.0px;transform-origin:100% 50%;transform:scaleX(0.95);-webkit-text-stroke:0.05px currentColor;">14</span>
<span class="t" style="top:188.08px;font-size:8.8px;line-height:10.56px;color:#111;left:auto;right:114.4px;transform-origin:100% 50%;transform:scaleX(0.95);-webkit-text-stroke:0.05px currentColor;">15</span>
<span class="t" style="top:188.08px;font-size:8.8px;line-height:10.56px;color:#111;left:auto;right:91.6px;transform-origin:100% 50%;transform:scaleX(0.95);-webkit-text-stroke:0.05px currentColor;">16</span>
<span class="t" style="top:188.08px;font-size:8.8px;line-height:10.56px;color:#111;left:auto;right:68.8px;transform-origin:100% 50%;transform:scaleX(0.95);-webkit-text-stroke:0.05px currentColor;">17</span>
<span class="t" style="top:188.08px;font-size:8.8px;line-height:10.56px;color:#111;left:auto;right:46.2px;transform-origin:100% 50%;transform:scaleX(0.95);-webkit-text-stroke:0.05px currentColor;">18</span>
<span class="t" style="top:188.08px;font-size:8.8px;line-height:10.56px;color:#111;left:auto;right:23.4px;transform-origin:100% 50%;transform:scaleX(0.95);-webkit-text-stroke:0.05px currentColor;">19</span>
<span class="t" style="top:199.10px;font-size:8.8px;line-height:10.56px;color:#111;left:auto;right:159.7px;transform-origin:100% 50%;transform:scaleX(0.95);-webkit-text-stroke:0.05px currentColor;">20</span>
<span class="t" style="top:199.10px;font-size:8.8px;line-height:10.56px;color:#111;left:auto;right:137.0px;transform-origin:100% 50%;transform:scaleX(0.95);-webkit-text-stroke:0.05px currentColor;">21</span>
<span class="t" style="top:199.10px;font-size:8.8px;line-height:10.56px;color:#111;left:auto;right:114.4px;transform-origin:100% 50%;transform:scaleX(0.95);-webkit-text-stroke:0.05px currentColor;">22</span>
<span class="t" style="top:199.10px;font-size:8.8px;line-height:10.56px;color:#111;left:auto;right:91.6px;transform-origin:100% 50%;transform:scaleX(0.95);-webkit-text-stroke:0.05px currentColor;">23</span>
<span class="t" style="top:199.10px;font-size:8.8px;line-height:10.56px;color:#111;left:auto;right:68.8px;transform-origin:100% 50%;transform:scaleX(0.95);-webkit-text-stroke:0.05px currentColor;">24</span>
<span class="t" style="top:199.10px;font-size:8.8px;line-height:10.56px;color:#111;left:auto;right:46.2px;transform-origin:100% 50%;transform:scaleX(0.95);-webkit-text-stroke:0.05px currentColor;">25</span>
<span class="t" style="top:199.10px;font-size:8.8px;line-height:10.56px;color:#111;left:auto;right:23.4px;transform-origin:100% 50%;transform:scaleX(0.95);-webkit-text-stroke:0.05px currentColor;">26</span>
<span class="t" style="top:210.12px;font-size:8.8px;line-height:10.56px;color:#111;left:auto;right:159.7px;transform-origin:100% 50%;transform:scaleX(0.95);-webkit-text-stroke:0.05px currentColor;">27</span>
<span class="t" style="top:210.12px;font-size:8.8px;line-height:10.56px;color:#111;left:auto;right:137.0px;transform-origin:100% 50%;transform:scaleX(0.95);-webkit-text-stroke:0.05px currentColor;">28</span>
<span class="t" style="top:210.12px;font-size:8.8px;line-height:10.56px;color:#111;left:auto;right:114.4px;transform-origin:100% 50%;transform:scaleX(0.95);-webkit-text-stroke:0.05px currentColor;">29</span>
<span class="t" style="top:210.12px;font-size:8.8px;line-height:10.56px;color:#111;left:auto;right:91.6px;transform-origin:100% 50%;transform:scaleX(0.95);-webkit-text-stroke:0.05px currentColor;">30</span>
<span class="t" style="top:210.12px;font-size:8.8px;line-height:10.56px;color:#111;left:auto;right:68.8px;transform-origin:100% 50%;transform:scaleX(0.95);-webkit-text-stroke:0.05px currentColor;">31</span>
<span class="t" style="top:210.12px;font-size:8.8px;line-height:10.56px;color:#8e8e8e;left:auto;right:46.2px;transform-origin:100% 50%;transform:scaleX(0.95);-webkit-text-stroke:0.05px currentColor;">1</span>
<span class="t" style="top:210.12px;font-size:8.8px;line-height:10.56px;color:#8e8e8e;left:auto;right:23.4px;transform-origin:100% 50%;transform:scaleX(0.95);-webkit-text-stroke:0.05px currentColor;">2</span>
<span class="t" style="top:221.14px;font-size:8.8px;line-height:10.56px;color:#8e8e8e;left:auto;right:159.7px;transform-origin:100% 50%;transform:scaleX(0.95);-webkit-text-stroke:0.05px currentColor;">3</span>
<span class="t" style="top:221.14px;font-size:8.8px;line-height:10.56px;color:#8e8e8e;left:auto;right:137.0px;transform-origin:100% 50%;transform:scaleX(0.95);-webkit-text-stroke:0.05px currentColor;">4</span>
<span class="t" style="top:221.14px;font-size:8.8px;line-height:10.56px;color:#8e8e8e;left:auto;right:114.4px;transform-origin:100% 50%;transform:scaleX(0.95);-webkit-text-stroke:0.05px currentColor;">5</span>
<span class="t" style="top:221.14px;font-size:8.8px;line-height:10.56px;color:#8e8e8e;left:auto;right:91.6px;transform-origin:100% 50%;transform:scaleX(0.95);-webkit-text-stroke:0.05px currentColor;">6</span>
<span class="t" style="top:221.14px;font-size:8.8px;line-height:10.56px;color:#8e8e8e;left:auto;right:68.8px;transform-origin:100% 50%;transform:scaleX(0.95);-webkit-text-stroke:0.05px currentColor;">7</span>
<span class="t" style="top:221.14px;font-size:8.8px;line-height:10.56px;color:#8e8e8e;left:auto;right:46.2px;transform-origin:100% 50%;transform:scaleX(0.95);-webkit-text-stroke:0.05px currentColor;">8</span>
<span class="t" style="top:221.14px;font-size:8.8px;line-height:10.56px;color:#8e8e8e;left:auto;right:23.4px;transform-origin:100% 50%;transform:scaleX(0.95);-webkit-text-stroke:0.05px currentColor;">9</span>
<span class="t" style="left:890.40px;top:232.74px;font-size:8.8px;line-height:10.56px;color:#111;transform:scaleX(0.9685);">Hoje: 24/05/2018</span>
<span class="t" style="left:823.00px;top:273.21px;font-size:8.2px;line-height:9.84px;color:#161630;transform:scaleX(0.9316);">Lista de Espera</span>
<span class="t" style="left:869.60px;top:304.38px;font-size:7.6px;line-height:9.12px;color:#111;font-weight:bold;font-family:'DejaVu Sans Condensed', 'DejaVu Sans', 'Liberation Sans', sans-serif;transform:scaleX(1.0602);">Nome</span>
<div class="a" style="left:0;top:0;width:990.3px;height:539px;overflow:hidden"><span class="t" style="left:928.80px;top:304.38px;font-size:7.6px;line-height:9.12px;color:#111;font-weight:bold;font-family:'DejaVu Sans Condensed', 'DejaVu Sans', 'Liberation Sans', sans-serif;transform:scaleX(1.0179);">Chegou Agendamento</span></div>
<span class="t" style="left:892.90px;top:369.48px;font-size:7.6px;line-height:9.12px;color:#111;font-weight:bold;font-family:'DejaVu Sans Condensed', 'DejaVu Sans', 'Liberation Sans', sans-serif;transform:scaleX(1.0647);"><u>P</u>esquisar</span>
<span class="t" style="left:894.60px;top:387.38px;font-size:7.6px;line-height:9.12px;color:#111;font-weight:bold;font-family:'DejaVu Sans Condensed', 'DejaVu Sans', 'Liberation Sans', sans-serif;transform:scaleX(1.0675);"><u>A</u>tualizar</span>
<span class="t" style="left:877.20px;top:404.58px;font-size:7.6px;line-height:9.12px;color:#111;font-weight:bold;font-family:'DejaVu Sans Condensed', 'DejaVu Sans', 'Liberation Sans', sans-serif;transform:scaleX(1.0613);"><u>E</u>nviar Lembretes</span>
<span class="t" style="left:878.60px;top:422.78px;font-size:7.6px;line-height:9.12px;color:#111;font-weight:bold;font-family:'DejaVu Sans Condensed', 'DejaVu Sans', 'Liberation Sans', sans-serif;transform:scaleX(1.0497);"><u>E</u>nviar por E-mail</span>
<span class="t" style="left:894.80px;top:440.58px;font-size:7.6px;line-height:9.12px;color:#111;font-weight:bold;font-family:'DejaVu Sans Condensed', 'DejaVu Sans', 'Liberation Sans', sans-serif;transform:scaleX(1.1001);"><u>I</u>mprimir</span>
<div class="a" style="left:0;top:0;width:1000px;height:502.2px;overflow:hidden"><span class="t" style="left:46.20px;top:492.77px;font-size:9.3px;line-height:11.16px;color:#111;transform:scaleX(1.0046);">Agenda</span></div>
<span class="t" style="left:1.50px;top:504.84px;font-size:8.9px;line-height:10.68px;color:#111;transform:scaleX(0.9718);">Status do Orçamento</span>
</div>
<div id="top">
<div class="a" style="left:194.8px;top:1.6px;width:1.80px;height:12.40px;background:linear-gradient(90deg,#6a6a6a,rgba(150,150,150,.25))"></div>
<div class="a" style="left:128.2px;top:-0.4px;width:66.60px;height:15.00px;background:#bfdcfb;border:1px solid #5ea9f2"></div>
<div class="a" style="left:128.2px;top:14px;width:161.90px;height:513.30px;background:#fff;border:1px solid #979797;border-bottom-color:#a4a4a4;box-shadow:1.3px 0.3px 0.6px rgba(0,0,0,.42)"></div>
<div class="a" style="left:129.2px;top:15px;width:22.80px;height:511.20px;background:linear-gradient(90deg,#ececec,#f6f6f6 40%,#fff)"></div>
<div class="a" style="left:153.5px;top:45.05px;width:133.80px;height:0.90px;background:#d2d2d2"></div>
<div class="a" style="left:153.5px;top:76.05px;width:133.80px;height:0.90px;background:#d2d2d2"></div>
<div class="a" style="left:153.5px;top:496.05px;width:133.80px;height:0.90px;background:#d2d2d2"></div>
<div class="a" style="left:130.1px;top:439.7px;width:157.80px;height:27.20px;background:#c3defb;border:1px solid #66a9ea"></div>
<svg class="a" style="left:279px;top:57px" width="6" height="8" viewBox="0 0 6 8"><path d="M1.2 1.2V6.4L4.4 3.8Z" fill="#111"/></svg>
<svg class="a" style="left:0;top:0" width="1000" height="539" viewBox="0 0 1000 539">
<g opacity="1"><path d="M131.8,39.6 C131.8,34.1 138.7,33.2 141.1,31.8 L145.9,31.8 C148.3,33.2 155.2,34.1 155.2,39.6 Q143.5,43.4 131.8,39.6Z" fill="url(#gBlueBody2)"/><clipPath id="cp2"><path d="M131.8,39.6 C131.8,34.1 138.7,33.2 141.1,31.8 L145.9,31.8 C148.3,33.2 155.2,34.1 155.2,39.6 Q143.5,43.4 131.8,39.6Z"/></clipPath><g clip-path="url(#cp2)"><path d="M130.8,30.6 H156.2 V36.6 Q143.5,38.4 130.8,36.6Z" fill="#fafafa"/><path d="M136.8,31.6 H138.8 V38.6 H136.5Z" fill="url(#gBlueBody2)"/><path d="M150.2,31.6 H148.2 V38.6 H150.5Z" fill="url(#gBlueBody2)"/><path d="M131.8,39.6 C131.8,34.1 138.7,33.2 141.1,31.8 L145.9,31.8 C148.3,33.2 155.2,34.1 155.2,39.6 Q143.5,43.4 131.8,39.6Z" fill="none" stroke="url(#gBlueBody2)" stroke-width="2.8"/><circle cx="137.8" cy="38.2" r="0.7" fill="#cfe0f6"/><circle cx="149.2" cy="38.2" r="0.7" fill="#cfe0f6"/></g><path d="M141.3,29.3 L140.8,32.9 Q143.5,34.8 146.2,32.9 L145.7,29.3Z" fill="#dfa566"/><circle cx="138.7" cy="26.6" r="1.27" fill="#e3ad72"/><circle cx="148.3" cy="26.6" r="1.27" fill="#e3ad72"/><path d="M138.7,23.2 C138.5,28.9 140.8,32.0 143.5,32.0 C146.2,32.0 148.5,28.9 148.3,23.2 Q143.5,18.4 138.7,23.2Z" fill="#f3d0a6"/><path d="M138.2,26.2 C136.6,16.2 150.4,16.2 148.8,26.2 C147.8,23.2 145.1,24.4 143.5,23.8 C141.4,24.4 139.2,23.2 138.2,26.2Z" fill="#5c5c5c"/></g>
<path d="M131.9,56H148.6V74.2H131.9Z" fill="#eaf1fb" stroke="#a9b9d0" stroke-width="0.8"/><path d="M132.9,60.6C134,57 138.6,53.4 144.4,52.6L148.6,52.2L149.6,59.4C147.6,59.8 146.4,60.2 145,61.4C143.4,62.9 141.6,63.6 140.2,63.4L138.2,62.4L136.4,63.2L135.2,62.2L133.6,62.4Q132.6,61.8 132.9,60.6Z" fill="#f7dfa6" stroke="#ddb565" stroke-width="0.5"/><path d="M134.6,61.8L137.6,59.4M136.6,62.6L139.6,60.2M138.8,62.6L141.4,60.6" stroke="#e3bf78" stroke-width="0.5" fill="none"/><path d="M148,50.8L153,49.8L154.4,58.4L149.4,59.6Z" fill="#3fb64c" stroke="#2b9a3a" stroke-width="0.5"/><path d="M149.2,51.4L152.2,50.8" stroke="#8fe09a" stroke-width="0.7"/>
<g transform="rotate(-24 143 91)"><path d="M139.6,81.6L144.4,78.4L149.2,81.6V102.2H139.6Z" fill="#fbfbfb" stroke="#c4c8cc" stroke-width="0.7"/><rect x="145.2" y="84.6" width="2.2" height="13.4" fill="#ecbc68"/></g><g transform="rotate(-24 141 92)"><path d="M134.4,83.4L139.6,79.8L144.8,83.4V103.4H134.4Z" fill="#fdfdfd" stroke="#c4c8cc" stroke-width="0.7"/><circle cx="139.6" cy="83.6" r="1.4" fill="#fff" stroke="#a8acb0" stroke-width="0.6"/><rect x="136.2" y="87.6" width="6.8" height="11.6" fill="#94b4de" stroke="#7fa2d4" stroke-width="0.5"/></g>
<path d="M143.80,108.00L147.27,114.83L154.83,116.02L149.41,121.42L150.62,128.98L143.80,125.50L136.98,128.98L138.19,121.42L132.77,116.02L140.33,114.83Z" fill="url(#gStar)" stroke="#e69a3a" stroke-width="0.9" stroke-linejoin="round"/>
<rect x="136.4" y="139.2" width="15.4" height="14.2" rx="1.2" fill="#f4f8ff" stroke="#4a9af2" stroke-width="1.2"/><rect x="136.4" y="139.2" width="15.4" height="3" fill="#4a9af2"/><path d="M140.4,143.6V152.8" stroke="#f0b232" stroke-width="2" stroke-linecap="round"/><circle cx="140.4" cy="143.8" r="1.7" fill="#f0b232"/><circle cx="140.4" cy="152.6" r="1.5" fill="#f0b232"/><path d="M146.8,146.4V153.4" stroke="#e64632" stroke-width="2" stroke-linecap="round"/><path d="M146.8,142.4V146.6" stroke="#9aa0a8" stroke-width="1"/>
<g opacity="1"><path d="M142.4,178.0 C142.4,175.3 143.4,174.4 145.0,173.0 L148.2,173.0 C149.8,174.4 155.2,175.3 155.2,178.0 Q146.6,181.8 142.4,178.0Z" fill="#f2f4f4"/><path d="M145.1,171.2 L144.8,174.1 Q146.6,176.0 148.4,174.1 L148.1,171.2Z" fill="#dfa566"/><circle cx="143.4" cy="169.2" r="0.86" fill="#e3ad72"/><circle cx="149.8" cy="169.2" r="0.86" fill="#e3ad72"/><path d="M143.4,166.7 C143.2,170.9 144.8,173.2 146.6,173.2 C148.4,173.2 150.0,170.9 149.8,166.7 Q146.6,163.2 143.4,166.7Z" fill="#f1cc9c"/><path d="M143.0,168.9 C141.9,161.6 151.3,161.6 150.2,168.9 C149.6,166.7 147.7,167.6 146.6,167.2 C145.2,167.6 143.6,166.7 143.0,168.9Z" fill="#6a6448"/></g>
<path d="M142.4,178 Q148.8,181.6 155.2,178" stroke="#cdd2d2" stroke-width="0.6" fill="none"/>
<g opacity="1"><path d="M132.0,185.0 C132.0,182.1 136.6,181.2 138.3,179.8 L141.7,179.8 C143.4,181.2 148.6,182.1 148.6,185.0 Q140.0,188.8 132.0,185.0Z" fill="#aac854"/><path d="M138.2,180.4L139.8,183.4L141.4,180.4Z" fill="#f6f6f0"/><path d="M138.4,177.9 L138.1,180.9 Q140.0,182.8 141.9,180.9 L141.6,177.9Z" fill="#dfa566"/><circle cx="136.6" cy="175.8" r="0.91" fill="#e3ad72"/><circle cx="143.4" cy="175.8" r="0.91" fill="#e3ad72"/><path d="M136.6,173.3 C136.4,177.6 138.1,179.9 140.0,179.9 C141.9,179.9 143.6,177.6 143.4,173.3 Q140.0,169.7 136.6,173.3Z" fill="#f1cc9c"/><path d="M136.2,175.6 C135.1,168.1 144.9,168.1 143.8,175.6 C143.1,173.3 141.1,174.2 140.0,173.8 C138.5,174.2 136.9,173.3 136.2,175.6Z" fill="#78683c"/></g>
<g opacity="1"><path d="M131.4,209.6 C131.4,205.9 137.8,205.0 139.9,203.6 L144.3,203.6 C146.4,205.0 151.0,205.9 151.0,209.6 Q142.1,213.4 131.4,209.6Z" fill="#eef1f2"/><path d="M140.1,201.4 L139.7,204.7 Q142.1,206.6 144.5,204.7 L144.1,201.4Z" fill="#dfa566"/><circle cx="137.8" cy="198.9" r="1.15" fill="#e3ad72"/><circle cx="146.4" cy="198.9" r="1.15" fill="#e3ad72"/><path d="M137.8,195.7 C137.5,201.1 139.7,203.9 142.1,203.9 C144.5,203.9 146.7,201.1 146.4,195.7 Q142.1,191.3 137.8,195.7Z" fill="#f1cc9c"/><path d="M137.3,198.5 C135.9,189.3 148.3,189.3 146.9,198.5 C146.0,195.7 143.5,196.8 142.1,196.3 C140.2,196.8 138.2,195.7 137.3,198.5Z" fill="#55514a"/></g>
<path d="M131.4,209.6 Q141.2,213.4 151,209.6" stroke="#b9c4c8" stroke-width="0.7" fill="none"/>
<path d="M149.60,203.00L151.30,206.25L154.93,206.87L152.36,209.50L152.89,213.13L149.60,211.50L146.31,213.13L146.84,209.50L144.27,206.87L147.90,206.25Z" fill="#f5e07a" stroke="#e6c552" stroke-width="0.4" transform="rotate(18 149.6 208.6)"/><path d="M149.60,203.20L151.30,206.25L154.74,206.93L152.36,209.50L152.77,212.97L149.60,211.50L146.43,212.97L146.84,209.50L144.46,206.93L147.90,206.25Z" fill="#f5e07a" opacity="0.9" transform="rotate(-18 149.6 208.6)"/><circle cx="149.6" cy="208.6" r="2.4" fill="#fbf2b6"/>
<rect x="139.4" y="220.4" width="7.6" height="4.4" rx="0.8" fill="#f3f3f3" stroke="#d4d4d4" stroke-width="0.5"/><rect x="138.2" y="224.6" width="10" height="16" rx="1.6" fill="#f8f8f8" stroke="#d2d2d2" stroke-width="0.6"/><rect x="139.6" y="225.6" width="7.2" height="1" fill="#c9c9c9"/><path d="M142.1,230.2H144.5V232.9H147.2V235.3H144.5V238H142.1V235.3H139.4V232.9H142.1Z" fill="#e3262e"/><path d="M142.6,240.6L145,241.6L148.6,238.2" stroke="#8ccc52" stroke-width="1.5" fill="none"/>
<g opacity="0.9"><path d="M133.2,251.6L144.6,247.4L151.6,263.6L140.2,267.8Z" fill="#ececec" stroke="#dcdcdc" stroke-width="0.5"/><path d="M135.6,249.6L147.6,248L150.6,264.6L138.8,266.4Z" fill="#f2f2f2" stroke="#dedede" stroke-width="0.5"/><path d="M138.4,248.2H150V266.4H138.4Z" fill="#f3f3f3" stroke="#e0e0e0" stroke-width="0.5" transform="rotate(6 144 257)"/></g><path d="M154.2,251L147.2,265" stroke="#4f8fe2" stroke-width="1.7" stroke-linecap="round"/><path d="M147.2,265L146.2,267.2" stroke="#555" stroke-width="1.3" stroke-linecap="round"/>
<rect x="137.2" y="278.4" width="13.4" height="16.2" fill="#dbe9fd" stroke="#93abe2" stroke-width="0.8"/><path d="M139.2,282.6H142.8" stroke="#5e96e4" stroke-width="1.1"/><path d="M144,282.40000000000003L145.6,284.1L148.8,280.20000000000005" stroke="#2ea43a" stroke-width="1.4" fill="none"/><path d="M139.2,287H142.8" stroke="#5e96e4" stroke-width="1.1"/><path d="M144,286.8L145.6,288.5L148.8,284.6" stroke="#2ea43a" stroke-width="1.4" fill="none"/><path d="M139.2,291.4H142.8" stroke="#5e96e4" stroke-width="1.1"/><path d="M144,291.2L145.6,292.9L148.8,289.0" stroke="#2ea43a" stroke-width="1.4" fill="none"/>
<g opacity="0.85"><path d="M133.4,320.4L145.6,304.6L149.8,309.2L141.4,322.2Z" fill="#e6e8ea"/><path d="M141.2,322.4L149.8,309.2L154.4,311.8L146.8,324.4Z" fill="#f7f7f7" stroke="#e3e6ea" stroke-width="0.5" stroke-dasharray="1 1"/><path d="M138.8,319.2L146.4,308.8L148.2,310.8L141.6,320.6Z" fill="#d3d6d9"/><path d="M133.4,320.8L141.2,322.8" stroke="#9cc8e8" stroke-width="0.9"/></g>
<rect x="133.4" y="331.9" width="21" height="20.6" rx="2" fill="#f1f1f1" stroke="#d3d3d3" stroke-width="0.8"/><path d="M135.6,335.2H139.2L140.4,336.6H143.8V342.4H135.6Z" fill="#f8d972" stroke="#e8c050" stroke-width="0.4"/><rect x="145.6" y="337.2" width="6.4" height="8" fill="#ead6ba"/><rect x="145.6" y="346.2" width="6.4" height="3.8" fill="#ead6ba"/>
<g opacity="1"><path d="M132.0,379.8 C132.0,373.1 139.0,372.2 141.4,370.8 L146.2,370.8 C148.6,372.2 155.2,373.1 155.2,379.8 Q143.8,383.6 132.0,379.8Z" fill="url(#gSuit)"/><path d="M140.2,371.8L143.8,381.8L147.4,371.8Z" fill="#fafafa"/><path d="M142.8,373.2H144.8L145.4,380.6L143.8,382.4L142.2,380.6Z" fill="#d33a36"/><path d="M141.6,368.0 L141.2,371.9 Q143.8,373.8 146.5,371.9 L146.0,368.0Z" fill="#dfa566"/><circle cx="139.0" cy="365.5" r="1.27" fill="#e3ad72"/><circle cx="148.6" cy="365.5" r="1.27" fill="#e3ad72"/><path d="M139.0,362.4 C138.8,367.7 141.2,370.5 143.8,370.5 C146.5,370.5 148.8,367.7 148.6,362.4 Q143.8,358.1 139.0,362.4Z" fill="#f1cfa6"/><path d="M138.5,365.2 C136.9,356.1 150.7,356.1 149.1,365.2 C148.1,362.4 145.4,363.6 143.8,363.1 C141.7,363.6 139.5,362.4 138.5,365.2Z" fill="#4a4640"/></g>
<rect x="132.6" y="386.6" width="7.0" height="20.8" fill="#f2f8ff" stroke="#78b4ea" stroke-width="0.9"/><path d="M132.6,389.4H139.6" stroke="#f3cc5a" stroke-width="1"/><path d="M132.6,393H139.6" stroke="#bcdcf6" stroke-width="0.6"/><path d="M132.6,396.6H139.6" stroke="#bcdcf6" stroke-width="0.6"/><path d="M132.6,400.2H139.6" stroke="#bcdcf6" stroke-width="0.6"/><path d="M132.6,403.8H139.6" stroke="#bcdcf6" stroke-width="0.6"/><path d="M136.1,389.8V407.2" stroke="#bcdcf6" stroke-width="0.6"/><rect x="146.6" y="386.6" width="8.0" height="20.8" fill="#f2f8ff" stroke="#78b4ea" stroke-width="0.9"/><path d="M146.6,389.4H154.6" stroke="#f3cc5a" stroke-width="1"/><path d="M146.6,393H154.6" stroke="#bcdcf6" stroke-width="0.6"/><path d="M146.6,396.6H154.6" stroke="#bcdcf6" stroke-width="0.6"/><path d="M146.6,400.2H154.6" stroke="#bcdcf6" stroke-width="0.6"/><path d="M146.6,403.8H154.6" stroke="#bcdcf6" stroke-width="0.6"/><path d="M150.6,389.8V407.2" stroke="#bcdcf6" stroke-width="0.6"/>
<path d="M137.4,398.8L148.8,391.2" stroke="#76a81e" stroke-width="2.2" stroke-linecap="round"/><path d="M137.4,398.8L148.8,391.2" stroke="#a4d438" stroke-width="1.2" stroke-linecap="round"/>
<rect x="136.4" y="421.8" width="12.6" height="9.6" rx="0.8" fill="#f6f6f6" stroke="#cfcfcf" stroke-width="0.7"/><path d="M136.8,424.6H148.6" stroke="#d8d8d8" stroke-width="0.6"/><rect x="138.2" y="426.4" width="3" height="2" fill="#bcd0ee"/><path d="M138.4,422.6H141.4" stroke="#5a8ad8" stroke-width="0.8"/><path d="M146.2,418.6L150.4,425.8H142Z" fill="#f6ee4a" stroke="#e6da3a" stroke-width="0.4"/>
<rect x="131.6" y="441.2" width="23.8" height="24.2" fill="#dbeafb"/><path d="M155.4,441.2V465.4" stroke="#a9b4c0" stroke-width="0.7"/><path d="M136.2,442.2H149.8V464H132.8V445.6Z" fill="#e6e6e6" stroke="#bdbdbd" stroke-width="0.7"/><path d="M136.2,442.2V445.6H132.8Z" fill="#f8f8f8" stroke="#bdbdbd" stroke-width="0.5"/><circle cx="134.8" cy="449.6" r="0.7" fill="#3c78d8"/><path d="M136.4,449.6H144.2" stroke="#8a8a8a" stroke-width="0.6"/><circle cx="134.8" cy="454.4" r="0.7" fill="#3c78d8"/><path d="M136.4,454.4H146" stroke="#8a8a8a" stroke-width="0.6"/><circle cx="134.8" cy="459" r="0.7" fill="#3c78d8"/><path d="M136.4,459H139.6" stroke="#8a8a8a" stroke-width="0.6"/><path d="M140.4,457.6L144.8,462.2L153.6,452.6" fill="none" stroke="#149a14" stroke-width="3"/><path d="M140.6,457.4L144.8,461.6L153.4,452.8" fill="none" stroke="#2bd02b" stroke-width="1.6"/>
<path d="M141.2,482L142.6,476.6L151.4,478.2L152.6,482.6Z" fill="#b4d0a4" stroke="#94b88a" stroke-width="0.4"/><path d="M143.8,481L145,477.4L150.4,478.8" fill="none" stroke="#dfeeda" stroke-width="0.8"/><path d="M133.2,471.6C135.2,470.4 138.6,471.4 140.4,473.2C142.2,475 142.6,477.6 141.8,479.6L139,481.4C137.8,478.2 135.4,475.4 133.2,471.6Z" fill="#f8dcc4" stroke="#e8b898" stroke-width="0.4"/><path d="M133.2,482.2L143.2,480.6L153.8,482.2V490.2L143.2,488.6L133.2,490.6Z" fill="url(#gWallet)"/><path d="M143.2,480.6V488.6" stroke="#c8742a" stroke-width="0.6"/><path d="M144.8,483.2L152,484V486.4L144.8,485.6Z" fill="#9cb8d4"/><path d="M134.6,484.4L141.4,483.4" stroke="#f4c894" stroke-width="0.9"/><path d="M133.2,490.6L143.2,488.6L153.8,490.2" stroke="#fff3e2" stroke-width="0.6" fill="none"/>
<g opacity="1"><path d="M132.6,511.8 C132.6,509.1 135.7,508.2 137.3,506.8 L140.3,506.8 C141.9,508.2 144.6,509.1 144.6,511.8 Q138.8,515.6 132.6,511.8Z" fill="#a8aeb4"/><path d="M137.4,505.2 L137.1,507.9 Q138.8,509.8 140.5,507.9 L140.2,505.2Z" fill="#dfa566"/><circle cx="135.7" cy="503.5" r="0.82" fill="#e3ad72"/><circle cx="141.9" cy="503.5" r="0.82" fill="#e3ad72"/><path d="M135.7,501.3 C135.6,505.0 137.1,506.9 138.8,506.9 C140.5,506.9 142.0,505.0 141.9,501.3 Q138.8,498.3 135.7,501.3Z" fill="#f0c49a"/><path d="M135.4,503.2 C134.4,496.9 143.2,496.9 142.2,503.2 C141.6,501.3 139.8,502.1 138.8,501.7 C137.4,502.1 136.0,501.3 135.4,503.2Z" fill="#c48a3a"/></g>
<g opacity="1"><path d="M142.4,514.8 C142.4,511.9 144.7,511.0 146.3,509.6 L149.3,509.6 C150.9,511.0 153.8,511.9 153.8,514.8 Q147.8,518.6 142.4,514.8Z" fill="#54b468"/><path d="M146.4,510L147.8,513L149.2,510Z" fill="#f4f4f4"/><path d="M146.4,508.0 L146.1,510.7 Q147.8,512.6 149.5,510.7 L149.2,508.0Z" fill="#dfa566"/><circle cx="144.7" cy="506.3" r="0.82" fill="#e3ad72"/><circle cx="150.9" cy="506.3" r="0.82" fill="#e3ad72"/><path d="M144.7,504.1 C144.6,507.8 146.1,509.7 147.8,509.7 C149.5,509.7 151.0,507.8 150.9,504.1 Q147.8,501.1 144.7,504.1Z" fill="#f0c49a"/><path d="M144.4,506.0 C143.4,499.7 152.2,499.7 151.2,506.0 C150.6,504.1 148.8,504.9 147.8,504.5 C146.4,504.9 145.0,504.1 144.4,506.0Z" fill="#b87a30"/></g>
<g opacity="1"><path d="M136.2,521.8 C136.2,520.7 138.7,519.8 140.3,518.4 L143.5,518.4 C145.1,519.8 147.4,520.7 147.4,521.8 Q141.9,525.6 136.2,521.8Z" fill="#3a94e2"/><path d="M140.6,518.8L141.8,521.6L143,518.8Z" fill="#f4f4f4"/><path d="M140.4,516.7 L140.1,519.5 Q141.9,521.4 143.7,519.5 L143.4,516.7Z" fill="#dfa566"/><circle cx="138.7" cy="514.9" r="0.86" fill="#e3ad72"/><circle cx="145.1" cy="514.9" r="0.86" fill="#e3ad72"/><path d="M138.7,512.6 C138.5,516.5 140.1,518.5 141.9,518.5 C143.7,518.5 145.3,516.5 145.1,512.6 Q141.9,509.5 138.7,512.6Z" fill="#f4cfa4"/><path d="M138.3,514.7 C137.2,508.1 146.6,508.1 145.5,514.7 C144.9,512.6 143.0,513.5 141.9,513.1 C140.5,513.5 138.9,512.6 138.3,514.7Z" fill="#f1c232"/></g>
</svg>
<span class="t" style="left:132.50px;top:1.54px;font-size:8.9px;line-height:10.68px;color:#111;transform:scaleX(0.9395);"><u>C</u>adastros</span>
<span class="t" style="left:161.00px;top:26.25px;font-size:8.9px;line-height:10.68px;color:#111;transform:scaleX(0.9568);">Inserir Paciente</span>
<span class="t" style="left:161.00px;top:55.95px;font-size:8.9px;line-height:10.68px;color:#111;transform:scaleX(0.9777);">Convênios</span>
<span class="t" style="left:161.00px;top:86.75px;font-size:8.9px;line-height:10.68px;color:#111;transform:scaleX(0.9719);">Categoria</span>
<span class="t" style="left:161.00px;top:114.55px;font-size:8.9px;line-height:10.68px;color:#111;transform:scaleX(0.9448);">Classificação</span>
<span class="t" style="left:161.00px;top:143.34px;font-size:8.9px;line-height:10.68px;color:#111;transform:scaleX(0.9920);">Diagnóstico</span>
<span class="t" style="left:161.00px;top:171.14px;font-size:8.9px;line-height:10.68px;color:#111;transform:scaleX(0.9689);">Grupo</span>
<span class="t" style="left:161.00px;top:197.94px;font-size:8.9px;line-height:10.68px;color:#111;transform:scaleX(0.9844);">Indicação</span>
<span class="t" style="left:161.00px;top:225.74px;font-size:8.9px;line-height:10.68px;color:#111;transform:scaleX(1.0136);">Medicamento</span>
<span class="t" style="left:161.00px;top:253.54px;font-size:8.9px;line-height:10.68px;color:#111;transform:scaleX(0.9725);">Modelos (Texto Livre)</span>
<span class="t" style="left:161.00px;top:282.35px;font-size:8.9px;line-height:10.68px;color:#111;transform:scaleX(0.9662);">Kits (Modelos de Texto)</span>
<span class="t" style="left:161.00px;top:310.14px;font-size:8.9px;line-height:10.68px;color:#111;transform:scaleX(1.0194);">Motivo Agendamento</span>
<span class="t" style="left:161.00px;top:336.94px;font-size:8.9px;line-height:10.68px;color:#111;transform:scaleX(1.0135);">Protocolo</span>
<span class="t" style="left:161.00px;top:364.75px;font-size:8.9px;line-height:10.68px;color:#111;transform:scaleX(0.9441);">Profissionais e Recursos</span>
<span class="t" style="left:161.00px;top:392.55px;font-size:8.9px;line-height:10.68px;color:#111;transform:scaleX(0.9806);">Relacionar Login Protocolo</span>
<span class="t" style="left:161.00px;top:421.35px;font-size:8.9px;line-height:10.68px;color:#111;transform:scaleX(0.9549);">Status Agenda</span>
<span class="t" style="left:161.00px;top:449.14px;font-size:8.9px;line-height:10.68px;color:#111;transform:scaleX(0.9706);">Status do Orçamento</span>
<span class="t" style="left:161.00px;top:475.94px;font-size:8.9px;line-height:10.68px;color:#111;transform:scaleX(0.9709);">Tipos de Pagamentos</span>
<span class="t" style="left:161.00px;top:506.75px;font-size:8.9px;line-height:10.68px;color:#111;transform:scaleX(0.9281);">Usuários</span>
</div>
</body></html>
